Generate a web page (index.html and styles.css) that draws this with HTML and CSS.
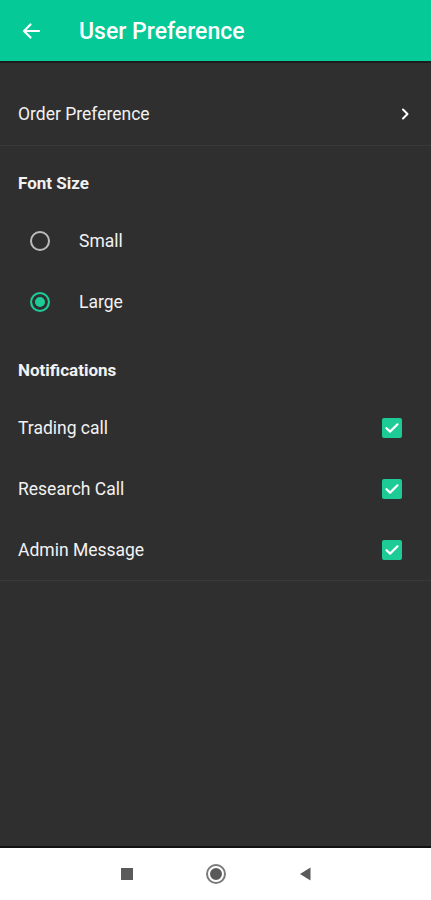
FILE: index.html
```html
<!DOCTYPE html>
<html lang="en">
<head>
    <meta charset="UTF-8">
    <meta name="viewport" content="width=device-width, initial-scale=1.0">
    <title>User Preference</title>
    <link rel="stylesheet" href="styles.css">
</head>
<body>
    <header class="app-bar">
        <svg class="back-icon" width="20" height="20" viewBox="0 0 20 20">
            <path d="M18 10H3M9.5 3.5L3 10l6.5 6.5" fill="none" stroke="#ffffff" stroke-width="2.2" stroke-linecap="round" stroke-linejoin="round"/>
        </svg>
        <h1 class="app-title">User Preference</h1>
    </header>

    <main class="content">
        <div class="pref-row">
            <span>Order Preference</span>
            <svg class="chevron" width="10" height="12" viewBox="0 0 10 12">
                <path d="M3 1.5L7.5 6 3 10.5" fill="none" stroke="#ffffff" stroke-width="2" stroke-linecap="round" stroke-linejoin="round"/>
            </svg>
        </div>

        <section class="section">
            <div class="section-title">Font Size</div>
            <div class="radio-row">
                <span class="radio"></span>
                <span class="radio-label">Small</span>
            </div>
            <div class="radio-row">
                <span class="radio radio-on"></span>
                <span class="radio-label">Large</span>
            </div>
        </section>

        <section class="section section-last">
            <div class="section-title">Notifications</div>
            <div class="check-row">
                <span>Trading call</span>
                <span class="checkbox"><svg width="20" height="20" viewBox="0 0 20 20"><path d="M4.5 10.2l3.6 3.4 7.4-7.3" fill="none" stroke="#ffffff" stroke-width="2.2" stroke-linecap="round" stroke-linejoin="round"/></svg></span>
            </div>
            <div class="check-row">
                <span>Research Call</span>
                <span class="checkbox"><svg width="20" height="20" viewBox="0 0 20 20"><path d="M4.5 10.2l3.6 3.4 7.4-7.3" fill="none" stroke="#ffffff" stroke-width="2.2" stroke-linecap="round" stroke-linejoin="round"/></svg></span>
            </div>
            <div class="check-row">
                <span>Admin Message</span>
                <span class="checkbox"><svg width="20" height="20" viewBox="0 0 20 20"><path d="M4.5 10.2l3.6 3.4 7.4-7.3" fill="none" stroke="#ffffff" stroke-width="2.2" stroke-linecap="round" stroke-linejoin="round"/></svg></span>
            </div>
        </section>
    </main>

    <nav class="nav-bar">
        <span class="nav-item"><span class="nav-square"></span></span>
        <span class="nav-item"><span class="nav-circle"></span></span>
        <span class="nav-item">
            <svg width="14" height="16" viewBox="0 0 14 16"><path d="M12.5 1.5v13L2 8z" fill="#5a5a5a"/></svg>
        </span>
    </nav>
</body>
</html>
```

FILE: styles.css
```css
body {
    margin: 0;
    height: 900px;
    display: flex;
    flex-direction: column;
    font-family: Roboto, "Noto Sans", sans-serif;
    font-size: 17.5px;
    background-color: #2f2f2f;
    color: #f2f2f2;
}
.app-bar {
    height: 61px;
    flex-shrink: 0;
    display: flex;
    align-items: center;
    padding-left: 21px;
    background-color: #05ca98;
    border-bottom: 2px solid #1c1c1c;
}
.app-title {
    margin: 2px 0 0 38px;
    font-size: 23px;
    font-weight: 500;
    color: #ffffff;
}
.content {
    flex: 1;
    padding-top: 20px;
}
.pref-row {
    height: 62px;
    display: flex;
    align-items: center;
    justify-content: space-between;
    padding: 0 21px 0 18px;
    border-bottom: 1px solid #393939;
}
.section {
    padding-top: 17px;
}
.section + .section {
    padding-top: 18px;
}
.section-last {
    border-bottom: 1px solid #393939;
}
.section-title {
    height: 40px;
    display: flex;
    align-items: center;
    padding-left: 18px;
    font-size: 17px;
    font-weight: 700;
    margin-bottom: 7px;
}
.radio-row {
    height: 61px;
    display: flex;
    align-items: center;
    padding-left: 30px;
}
.radio {
    width: 16px;
    height: 16px;
    border: 2px solid #bdbdbd;
    border-radius: 50%;
    box-sizing: content-box;
}
.radio-on {
    border-color: #1ccb96;
    background-color: #1ccb96;
    box-shadow: inset 0 0 0 3px #2f2f2f;
}
.radio-label {
    margin-left: 29px;
}
.check-row {
    height: 61px;
    display: flex;
    align-items: center;
    justify-content: space-between;
    padding: 0 29px 0 18px;
}
.check-row:first-of-type {
    margin-top: 1px;
}
.checkbox {
    width: 20px;
    height: 20px;
    border-radius: 2px;
    background-color: #1ccb96;
    display: flex;
}
.nav-bar {
    height: 52px;
    flex-shrink: 0;
    display: flex;
    align-items: center;
    justify-content: center;
    gap: 65px;
    background-color: #ffffff;
    border-top: 2px solid #111111;
}
.nav-item {
    width: 24px;
    height: 24px;
    display: flex;
    align-items: center;
    justify-content: center;
}
.nav-square {
    width: 12px;
    height: 12px;
    background-color: #5a5a5a;
}
.nav-circle {
    width: 12px;
    height: 12px;
    border-radius: 50%;
    background-color: #5a5a5a;
    border: 2px solid #ffffff;
    box-shadow: 0 0 0 2px #7a7a7a;
}
```
